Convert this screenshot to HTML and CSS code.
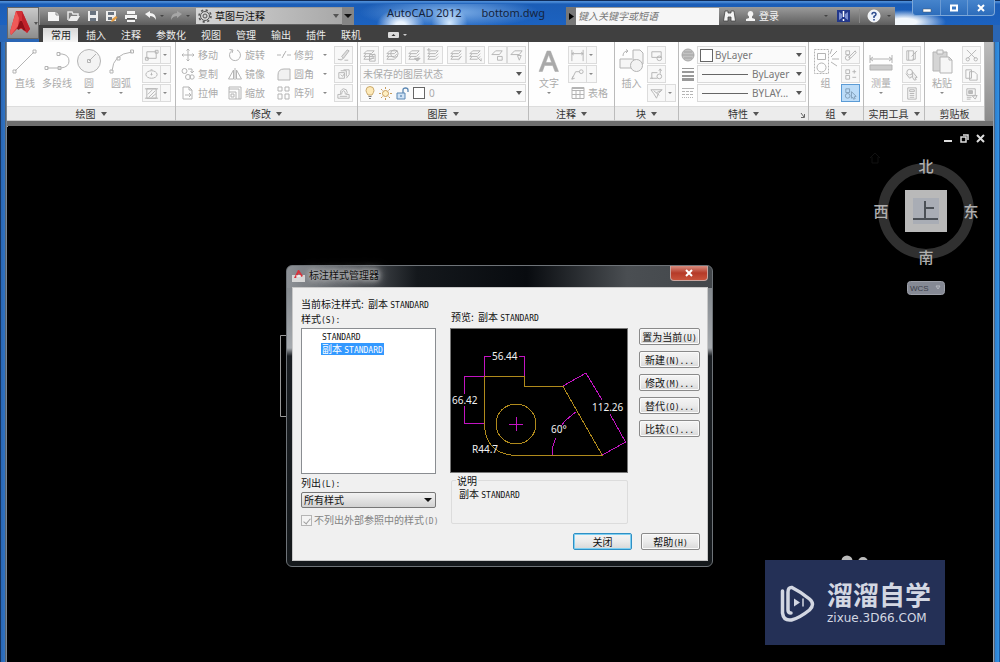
FILE: index.html
```html
<!DOCTYPE html>
<html lang="zh-CN">
<head>
<meta charset="utf-8">
<title>AutoCAD 2012 bottom.dwg</title>
<link rel="stylesheet" href="styles.css">
</head>
<body>
<svg class="defs" aria-hidden="true">
  <symbol id="layers" viewBox="0 0 16 16"><path d="M5 3h8l-3 3H2zM4 6.500l-2 2.500h8l3-3M4 9.500l-2 2.500h8l3-3"/></symbol>
  <symbol id="table" viewBox="0 0 14 14"><path d="M1 1.500h12v11H1zM1 4.500h12M1 8.500h12M5 4.500v8M9 4.500v8M1 2.500h12"/></symbol>
</svg>
<div class="window">
  <header class="top">
    <button class="appbtn" aria-label="应用程序菜单">
      <svg width="22" height="28" viewBox="0 0 22 28"><path d="M7 2l6 0 8 18-3 4-5-4H8l-6 6-1-3z" fill="#d32f35"/><path d="M7 2L1 23l1 3 7-9 1-8z" fill="#ef5a58"/><path d="M13 2l8 18-3 4-5-13z" fill="#c0212a"/><path d="M8 20l3-8h2l4 10-3-1-1-2h-2l-1 2z" fill="#8f0f17"/></svg>
      <i class="caret dark"></i>
    </button>
    <div class="heads">
      <div class="titlebar">
        <div class="qat">
          <button aria-label="新建"><svg width="14" height="12" viewBox="0 0 14 12"><path d="M1 2h8l3 3v6H1z" fill="#f4f4f4"/><path d="M9 2v3h3" stroke="#888" fill="none"/></svg></button>
          <button aria-label="打开"><svg width="14" height="12" viewBox="0 0 14 12"><path d="M1 10V2h4l1 2h5v2" fill="none" stroke="#e8e8e8" stroke-width="1.500"/><path d="M4 6h9l-3 5H1z" fill="#ececec"/></svg></button>
          <button aria-label="保存"><svg width="12" height="12" viewBox="0 0 12 12"><path d="M1 1h10v10H1z" fill="#eee"/><path d="M3 1h6v4H3z" fill="#69737f"/><path d="M3 8h6v3H3z" fill="#69737f"/></svg></button>
          <button aria-label="另存为"><svg width="13" height="13" viewBox="0 0 13 13"><path d="M1 1h10v10H1z" fill="#eee"/><path d="M3 2h6v3H3zM3 7h4v3H3z" fill="#69737f"/><path d="M6 12l1-3 4-3 1.500 1.500L9 11z" fill="#e49d44"/></svg></button>
          <button aria-label="打印"><svg width="14" height="13" viewBox="0 0 14 13"><path d="M3 1h8v3H3zM1 5h12v4H1zM3 10h8v2H3z" fill="#f4f4f4"/><path d="M3 8.500h8" stroke="#555"/></svg></button>
          <button aria-label="放弃"><svg width="13" height="12" viewBox="0 0 13 12"><path d="M1 4l5-3v2q6 0 6 7-2-4-6-4v2z" fill="#f4f4f4"/></svg></button>
          <i class="caret dim"></i>
          <button aria-label="重做"><svg width="13" height="12" viewBox="0 0 13 12"><path d="M12 4L7 1v2Q1 3 1 10q2-4 6-4v2z" fill="#a6a6a6"/></svg></button>
          <i class="caret dim"></i>
          <label class="workspace">
            <svg width="14" height="14" viewBox="0 0 14 14" fill="none" stroke="#555"><circle cx="7" cy="7" r="4.500"/><circle cx="7" cy="7" r="6" stroke-dasharray="2.200 2.500" stroke-width="1.600"/><circle cx="7" cy="7" r="2"/></svg>
            <select aria-label="工作空间"><option>草图与注释</option></select>
            <i class="caret dark"></i>
          </label>
          <button class="more" aria-label="自定义"><i class="caret black"></i></button>
        </div>
        <h1 class="apptitle"><span>AutoCAD 2012</span><span>bottom.dwg</span></h1>
        <div class="info">
          <button class="expand" aria-label="折叠"><svg width="5" height="7" viewBox="0 0 5 7"><path d="M0 0l5 3.500L0 7z"/></svg></button>
          <input class="search" type="text" placeholder="键入关键字或短语" aria-label="搜索">
          <button aria-label="查找"><svg width="13" height="14" viewBox="0 0 13 14"><path d="M2 2h3v2h3V2h3l1.500 10H8V8H5v4H.500z" fill="#f4f4f4" stroke="#444" stroke-width=".8"/></svg></button>
          <button class="login"><svg width="11" height="12" viewBox="0 0 11 12"><path d="M5.500 1a3 3 0 0 1 1.500 5.500V8l3 1v2H1V9l3-1V6.500A3 3 0 0 1 5.500 1z" fill="#f4f4f4"/></svg><span>登录</span></button>
          <i class="caret dim"></i>
          <button aria-label="Exchange"><svg width="13" height="12" viewBox="0 0 13 12"><path d="M0 0h13v12H0z" fill="#23388b"/><path d="M2 2l3 2v4l-3 2zM11 2L8 4v4l3 2z" fill="#7c8fd0"/><path d="M6.500 1v6M6.500 9v2" stroke="#fff" stroke-width="1.500"/></svg></button>
          <button class="help" aria-label="帮助"><svg width="14" height="14" viewBox="0 0 14 14"><circle cx="7" cy="7" r="6" fill="#eef3fb" stroke="#fff"/><path d="M5 5.500Q5 3.500 7 3.500t2 1.800Q9 6.500 7 7.500V9M7 10v1.500" fill="none" stroke="#2c4b8f" stroke-width="1.500"/></svg></button>
          <i class="caret dim"></i>
        </div>
        <div class="wincontrols">
          <button aria-label="最小化"><svg width="10" height="10" viewBox="0 0 10 10"><path d="M1 6h8v3H1z" fill="#fff" stroke="#456" stroke-width=".5"/></svg></button>
          <button aria-label="最大化"><svg width="10" height="10" viewBox="0 0 10 10"><path d="M2 2.500h6v5H2z" fill="none" stroke="#fff" stroke-width="2"/></svg></button>
          <button aria-label="关闭"><svg width="10" height="10" viewBox="0 0 10 10"><path d="M2 2l6 6M8 2L2 8" stroke="#fff" stroke-width="2"/></svg></button>
        </div>
      </div>
      <nav class="tabs">
        <button class="active">常用</button><button>插入</button><button>注释</button><button>参数化</button><button>视图</button><button>管理</button><button>输出</button><button>插件</button><button>联机</button>
        <button class="toggle" aria-label="最小化功能区"><svg width="11" height="6" viewBox="0 0 11 6"><rect width="11" height="6" rx="1" fill="#ddd"/><path d="M3.500 4l2-2 2 2z" fill="#333"/></svg><i class="caret light"></i></button>
      </nav>
    </div>
  </header>

  <div class="ribbon">
    <section class="panel">
      <div class="body draw">
        <div class="bigs">
          <button class="big"><svg width="26" height="26" viewBox="0 0 26 26"><path d="M3 23L22 4M1 22h3v3H1zM21 2h3v3h-3z"/></svg>直线</button>
          <button class="big"><svg width="26" height="26" viewBox="0 0 26 26"><path d="M15 6h3q7 1 7 7t-8 7H3M13 4.500h3v3h-3zM1 18.500h3v3H1zM14 18.500h3v3h-3z"/></svg>多段线</button>
          <button class="big"><svg width="26" height="26" viewBox="0 0 26 26"><circle cx="13" cy="13" r="11.500" fill="#f3f3f3"/><path d="M13 13l7-7M11.500 11.500h3v3h-3z"/></svg>圆<i class="caret"></i></button>
          <button class="big"><svg width="26" height="26" viewBox="0 0 26 26"><path d="M4 23Q5 6 24 4M2 22h3v3H2zM9 9h3v3H9zM22.500 2h3v3h-3z"/></svg>圆弧<i class="caret"></i></button>
        </div>
        <div class="stack">
          <button class="tool split"><svg viewBox="0 0 16 16"><path d="M3 4h10v7H3zM1.500 10h3v3h-3zM12 2.500h3v3h-3z"/></svg><i class="caret"></i></button>
          <button class="tool split"><svg viewBox="0 0 16 16"><ellipse cx="8" cy="8" rx="6" ry="4"/><path d="M8 6v3M7 8h2M7 3h2"/></svg><i class="caret"></i></button>
          <button class="tool split"><svg viewBox="0 0 16 16"><path d="M3 3h10v10H3zM5 12l7-7M4 9l5-5M8 12l5-4M1 3h14M1 13h14"/></svg><i class="caret"></i></button>
        </div>
      </div>
      <h2>绘图<i class="caret dark"></i></h2>
    </section>

    <section class="panel">
      <div class="body modify">
        <button class="txt"><svg viewBox="0 0 14 14"><path d="M7 1v4M7 9v4M1 7h4M9 7h4M5.500 2.500L7 1l1.500 1.500M5.500 11.500L7 13l1.500-1.500M2.500 5.500L1 7l1.500 1.500M11.500 5.500L13 7l-1.500 1.500M6 6h2v2H6z"/></svg>移动</button>
        <button class="txt"><svg viewBox="0 0 14 14"><path d="M9 2a5.500 5.500 0 1 1-5 .5M1.500 1.500L5 2 4 5"/></svg>旋转</button>
        <button class="txt"><svg viewBox="0 0 14 14"><path d="M0 7h4M10 7h4M5 10l4-7M6 7h1"/></svg>修剪<i class="caret"></i></button>
        <button class="tool"><svg viewBox="0 0 16 16"><path d="M2 12q4 2 6-1M6 9l6-7 2 1-6 8zM9 13h4" fill="#ddd"/></svg></button>
        <button class="txt"><svg viewBox="0 0 14 14"><circle cx="3.500" cy="4" r="2.500"/><circle cx="7" cy="10" r="2.500"/><circle cx="11" cy="10" r="2.200"/><path d="M7 2h4v3M9.500 4L11 6l2-2"/></svg>复制</button>
        <button class="txt"><svg viewBox="0 0 14 14"><path d="M7 1v12M5.500 3v9h-5zM8.500 3v9h5z"/></svg>镜像</button>
        <button class="txt"><svg viewBox="0 0 14 14"><path d="M1 13V8q0-6 6-6h6v11z" fill="#f1f1f1"/></svg>圆角<i class="caret"></i></button>
        <button class="tool"><svg viewBox="0 0 16 16"><path d="M3 6h6v6H3zM5 4h6v6M8 3h6v5l-3 4M5 8l2 2 2-3"/></svg></button>
        <button class="txt"><svg viewBox="0 0 14 14"><path d="M2 13V1h6l3 3v9zM4 9h6M8 7l2 2-2 2M8 1v3h3"/></svg>拉伸</button>
        <button class="txt"><svg viewBox="0 0 14 14"><path d="M1 1h12v12H1zM1 6h7v7M1 3h10v10M3 8h3v3H3z"/></svg>缩放</button>
        <button class="txt"><svg viewBox="0 0 14 14"><path d="M1 1h4v4H1zM8 1h4v4H8zM1 8h4v5H1zM8 8h4v5H8z"/></svg>阵列<i class="caret"></i></button>
        <button class="tool"><svg viewBox="0 0 16 16"><path d="M2 13V9h3q-1-5 3-6 4 0 4 4l-1 2h3v4zM4 11h8M6 9q0-4 2-4t2 4"/></svg></button>
      </div>
      <h2>修改<i class="caret dark"></i></h2>
    </section>

    <section class="panel">
      <div class="body layer">
        <div class="pairs">
          <button class="tool"><svg viewBox="0 0 16 16"><use href="#layers"/><path d="M8 7h6v7H8zM9 9h4M9 11h4"/></svg></button>
          <button class="tool"><svg viewBox="0 0 16 16"><use href="#layers"/><circle cx="10" cy="6" r="4"/></svg></button>
          <span><button class="tool"><svg viewBox="0 0 16 16"><use href="#layers"/><path d="M8 11h6l-3 3z" fill="#bbb"/></svg></button><button class="tool"><svg viewBox="0 0 16 16"><use href="#layers"/><path d="M1 2h4M3 0v4"/></svg></button></span>
          <span><button class="tool"><svg viewBox="0 0 16 16"><use href="#layers"/><path d="M13 9l-3 4"/></svg></button><button class="tool"><svg viewBox="0 0 16 16"><use href="#layers"/><path d="M10 10l4 4v-3"/></svg></button></span>
          <span><button class="tool"><svg viewBox="0 0 16 16"><path d="M2 7l4-4h7l-3 4zM8 9h5v4H8z"/></svg></button><button class="tool"><svg viewBox="0 0 16 16"><path d="M2 7l4-4h8l-3 4zM9 8h4l-2 5z"/></svg></button></span>
        </div>
        <label class="combo"><select aria-label="图层状态"><option>未保存的图层状态</option></select><i class="caret dark"></i></label>
        <label class="combo icons">
          <svg width="10" height="14" viewBox="0 0 10 14"><path d="M3 9Q1 6 1 4.500a4 4 0 0 1 8 0Q9 6 7 9z" fill="#fde9b8" stroke="#c9a86a"/><path d="M3.500 10.500h3M4 12.500h2" stroke="#777"/></svg>
          <svg width="13" height="13" viewBox="0 0 13 13"><circle cx="6.500" cy="6.500" r="3" fill="#fff0c4" stroke="#c99d5c"/><path d="M6.500 0v2M6.500 11v2M0 6.500h2M11 6.500h2M2 2l1.500 1.500M9.500 9.500L11 11M11 2L9.500 3.500M2 11l1.500-1.500" stroke="#c99d5c"/></svg>
          <svg width="13" height="13" viewBox="0 0 13 13"><path d="M1 6h8v6H1z" fill="#cfe2f5" stroke="#5b87b3"/><path d="M7 6V3q0-2 2.500-2T12 3v2M5 8v2" fill="none" stroke="#5b87b3" stroke-width="1.300"/></svg>
          <b class="swatch"></b>
          <select aria-label="图层"><option>0</option></select><i class="caret dark"></i>
        </label>
      </div>
      <h2>图层<i class="caret dark"></i></h2>
    </section>

    <section class="panel">
      <div class="body annot">
        <button class="big"><svg width="26" height="26" viewBox="0 0 26 26"><path d="M3 23.500L11 3h3.500l8 20.500h-3.500l-2.300-6H8.600l-2.200 6zM9.800 14.500h5.800L12.700 6.800z" fill="#a9a9a9" stroke="#a9a9a9" stroke-width=".5"/></svg>文字<i class="caret"></i></button>
        <div class="stack">
          <button class="tool split"><svg viewBox="0 0 16 16"><path d="M2 2v12M14 2v12M2 6h12M4 4.500L2 6l2 1.500M12 4.500L14 6l-2 1.500"/></svg><i class="caret"></i></button>
          <button class="tool split"><svg viewBox="0 0 16 16"><path d="M2 13l4-8h4M3 10l-1 3 3-1"/><circle cx="12" cy="5" r="2"/></svg><i class="caret"></i></button>
          <button class="txt"><svg viewBox="0 0 14 14"><use href="#table"/></svg>表格</button>
        </div>
      </div>
      <h2>注释<i class="caret dark"></i></h2>
    </section>

    <section class="panel">
      <div class="body block">
        <button class="big"><svg width="26" height="26" viewBox="0 0 26 26"><path d="M14 10V2h7l3 3v11h-8" fill="#f6f6f6"/><path d="M1 11h14v9H1z" fill="#f6f6f6"/><circle cx="17.500" cy="17.500" r="6" fill="#f3f3f3"/><path d="M4 8q0-5 5-5M7 1.500L9 3 7 5"/></svg>插入</button>
        <div class="stack">
          <button class="tool"><svg viewBox="0 0 16 16"><path d="M3 4h10v6H3z"/><circle cx="11" cy="11" r="2.500"/></svg></button>
          <button class="tool"><svg viewBox="0 0 16 16"><path d="M9 6H3v6h6M12 2v5M10.500 4L12 2l1.500 2M1 12h3"/><circle cx="11" cy="10" r="2.500"/></svg></button>
          <button class="tool split"><svg viewBox="0 0 16 16"><path d="M2 4h12l-4 4-2 5-3-5zM5 5l6 5M8 7l5-2"/></svg><i class="caret"></i></button>
        </div>
      </div>
      <h2>块<i class="caret dark"></i></h2>
    </section>

    <section class="panel">
      <div class="body props">
        <svg width="14" height="14" viewBox="0 0 14 14"><circle cx="7" cy="7" r="6" fill="#c2c2c2" stroke="#aaa"/><path d="M1 7h12M3 4h8M3 10h8" stroke="#a2a2a2"/></svg>
        <label class="combo"><b class="swatch"></b><select aria-label="颜色"><option>ByLayer</option></select><i class="caret dark"></i></label>
        <svg width="14" height="14" viewBox="0 0 14 14" shape-rendering="crispEdges"><path d="M1 1h12v1H1zM1 4h12v2H1zM1 8h12v2H1zM1 11h12v3H1z" fill="#999" stroke="none"/></svg>
        <label class="combo line"><hr><select aria-label="线宽"><option>ByLayer</option></select><i class="caret dark"></i></label>
        <svg width="14" height="14" viewBox="0 0 14 14"><path d="M1 2.500h12"/><path d="M1 5.500h12M1 8.500h12" stroke-dasharray="3 1"/><path d="M1 11.500h12" stroke-dasharray="1 1"/></svg>
        <label class="combo line"><hr><select aria-label="线型"><option>BYLAY...</option></select><i class="caret dark"></i></label>
      </div>
      <h2>特性<i class="caret dark"></i><button class="launcher" aria-label="特性设置"><svg width="5" height="5" viewBox="0 0 5 5"><path d="M1 0l3 4M4.500 1v3.500H1" stroke="#666" fill="none"/></svg></button></h2>
    </section>

    <section class="panel">
      <div class="body">
        <button class="big"><svg width="26" height="26" viewBox="0 0 26 26"><path d="M1.500 1.500h14v24h-14z" stroke-dasharray="2 1"/><path d="M4.500 5.500h8v6h-8zM18 9l6-6M19 11h7M17 6l2-5M18 14l6 4"/><circle cx="8.500" cy="19.500" r="4.500"/></svg>组</button>
        <div class="stack">
          <button class="tool"><svg viewBox="0 0 16 16"><path d="M3 3h4v4H3zM6 10l7-7 1 2-6 6z"/><circle cx="5" cy="10.500" r="2.500"/></svg></button>
          <button class="tool"><svg viewBox="0 0 16 16"><path d="M3 3h4v4H3zM3 9h4v4H3zM10 5h4M12 3v4M10 11h4"/></svg></button>
          <button class="tool on"><svg viewBox="0 0 16 16"><path d="M3 3h4v4H3zM9 6l5 5-2 .500 1 2-2 .500-.500-2L9 13z"/><circle cx="5" cy="10.500" r="2.500"/></svg></button>
        </div>
      </div>
      <h2>组<i class="caret dark"></i></h2>
    </section>

    <section class="panel">
      <div class="body">
        <button class="big"><svg width="26" height="26" viewBox="0 0 26 26"><path d="M2 7v8M24 7v8M2 11h22M5 9l-3 2 3 2M21 9l3 2-3 2"/><path d="M2 17h22v5H2z" fill="#ccc"/></svg>测量<i class="caret"></i></button>
        <div class="stack">
          <button class="tool"><svg viewBox="0 0 16 16"><path d="M3 3h7v10H3zM5 3v10M8 9l6-6M12 4v8H9"/></svg></button>
          <button class="tool"><svg viewBox="0 0 16 16"><circle cx="6" cy="5.500" r="3"/><path d="M2 7l4 5 3-2M9 5l5 6-2 .500 1 2-2 .500-2-3z" fill="#eee"/></svg></button>
          <button class="tool"><svg viewBox="0 0 16 16"><path d="M4 2h9v12H4zM6 4h5v2H6zM6 8h5M6 10h5M6 12h5"/></svg></button>
        </div>
      </div>
      <h2>实用工具<i class="caret dark"></i></h2>
    </section>

    <section class="panel">
      <div class="body">
        <button class="big"><svg width="26" height="26" viewBox="0 0 26 26"><path d="M4 4h14v19H4z" fill="#d5d5d5"/><path d="M8 2h6v4H8z" fill="#eee"/><path d="M11 9h9l3 3v13H11z" fill="#f6f6f6"/><path d="M20 9v3h3"/></svg>粘贴<i class="caret"></i></button>
        <div class="stack">
          <button class="tool"><svg viewBox="0 0 16 16"><path d="M3 2l9 9M13 2l-9 9"/><circle cx="4" cy="12" r="1.800"/><circle cx="12.500" cy="12" r="1.800"/></svg></button>
          <button class="tool"><svg viewBox="0 0 16 16"><path d="M2 3h6v9H2zM6 5h5l3 3v6H6z" fill="#fafafa"/></svg></button>
          <button class="tool"><svg viewBox="0 0 16 16"><path d="M3 3h9v7H3zM3 12h5M3 14h4M9 11l3 3 2-4z" /><path d="M5 5h4v3H5z" fill="#bbb"/></svg></button>
        </div>
      </div>
      <h2>剪贴板</h2>
    </section>
  </div>

  <main class="canvas">
    <div class="docbtns">
      <button aria-label="最小化文档"><svg width="9" height="9" viewBox="0 0 9 9"><path d="M0 6h8v2H0z" fill="#ddd"/></svg></button>
      <button aria-label="还原文档"><svg width="9" height="9" viewBox="0 0 9 9"><path d="M1 3h5v5H1zM3 1h5v5" fill="none" stroke="#ddd" stroke-width="1.500"/></svg></button>
      <button aria-label="关闭文档"><svg width="9" height="9" viewBox="0 0 9 9"><path d="M1 1l7 7M8 1L1 8" stroke="#ddd" stroke-width="2"/></svg></button>
    </div>
    <svg class="viewcube" width="118" height="148" viewBox="866 148 118 148">
      <path d="M870 158l5-5 5 5M872 157v6h6v-6" fill="none" stroke="#111"/>
      <circle cx="926" cy="211" r="43" fill="none" stroke="#303030" stroke-width="10"/>
      <path d="M905 190h42v42h-42z" fill="#b9b9b9"/><path d="M913 198h26v26h-26z" fill="#a9adb5"/>
      <path d="M925 201v18M926 208h8M913 219h25" stroke="#4b5056" stroke-width="2" fill="none"/>
      <g class="compass"><text x="926" y="172">北</text><text x="881" y="217">西</text><text x="971" y="217">东</text><text x="926" y="263">南</text></g>
      <rect x="907.500" y="281.500" width="37" height="13" rx="3" fill="#858994" stroke="#9ea1aa"/>
      <text class="wcs" x="910" y="291">WCS</text><path d="M936 286l2 3 2-3z" fill="none" stroke="#b5b8c0"/>
    </svg>
    <svg class="sketch" width="6" height="82" viewBox="0 0 6 82"><path d="M6 .500H.500v81H6" fill="none" stroke="#999"/></svg>

    <section class="dialog" role="dialog" aria-labelledby="dlgtitle">
      <header>
        <svg width="13" height="12" viewBox="0 0 13 12"><path d="M0 5h13v7H0z" fill="#d8d8d8"/><path d="M2 8L6 0h1l4 6-2 1-2-4-3 5z" fill="#d6333c"/><path d="M4 6h5" stroke="#fff"/></svg>
        <h2 id="dlgtitle">标注样式管理器</h2>
        <button class="close" aria-label="关闭"><svg width="8" height="8" viewBox="0 0 8 8"><path d="M1 1l6 6M7 1L1 7" stroke="#fff" stroke-width="2"/></svg></button>
      </header>
      <div class="client">
        <p>当前标注样式: <span>副本 <tt>STANDARD</tt></span></p>
        <div class="cols">
          <div class="left">
            <p id="styles">样式<tt>(S):</tt></p>
            <ul class="list" role="listbox" aria-labelledby="styles">
              <li role="option"><tt>STANDARD</tt></li>
              <li role="option" aria-selected="true" class="sel">副本 <tt>STANDARD</tt></li>
            </ul>
            <label class="listout" for="out">列出<tt>(L):</tt></label>
            <div class="drop"><select id="out"><option>所有样式</option></select><i class="caret black"></i></div>
            <label class="check"><input type="checkbox" checked disabled><span>不列出外部参照中的样式<tt>(D)</tt></span></label>
          </div>
          <div class="mid">
            <p>预览: <span>副本 <tt>STANDARD</tt></span></p>
            <svg class="preview" width="176" height="143" viewBox="451 329 176 143" role="img" aria-label="标注预览">
              <path d="M451 329h176v143H451z" fill="#000"/>
              <g class="dim"><path d="M484.500 376V356.500h6M519 356.500h5.500V376M484 376.500H464.500V394M464.500 406V423.500H484M563 386l23-13 16 27M610 414l15.500 28-23 13M552 455q0-9 4-17M561 426q5-7 15-14M516.500 417v14M509 424.500h14"/></g>
              <g class="part"><path d="M524.500 376.500v10H563L602.500 455.500H516Q485 454 484.500 424V376.500z"/><circle cx="516" cy="424" r="20"/></g>
              <g class="nums"><text x="492" y="360">56.44</text><text x="452" y="404">66.42</text><text x="592" y="411">112.26</text><text x="551" y="433">60°</text><text x="472" y="453">R44.7</text></g>
            </svg>
            <fieldset><legend>说明</legend>副本 <tt>STANDARD</tt></fieldset>
          </div>
          <div class="right">
            <button class="btn">置为当前<tt>(U)</tt></button>
            <button class="btn">新建<tt>(N)...</tt></button>
            <button class="btn">修改<tt>(M)...</tt></button>
            <button class="btn">替代<tt>(O)...</tt></button>
            <button class="btn">比较<tt>(C)...</tt></button>
          </div>
        </div>
        <footer><button class="btn primary">关闭</button><button class="btn">帮助<tt>(H)</tt></button></footer>
      </div>
    </section>

    <div class="watermark">
      <svg class="dots" width="28" height="5" viewBox="0 0 28 5"><circle cx="6" cy="6" r="5.500" fill="#bbb"/><circle cx="22" cy="7" r="5" fill="#bbb"/></svg>
      <svg width="36" height="38" viewBox="0 0 36 38" fill="none" stroke="#d3d7e2" stroke-width="3.500" stroke-linecap="round"><path d="M2.500 7v22q1 8 9 7 8-2 18-10 6-6 0-11Q21 8 12 3.500 8 3 8 8v18q0 3 3 3"/><path d="M14 14.500l6 4-6 4z" fill="#d3d7e2" stroke="none"/><path d="M23 15v7" stroke-width="1.500"/></svg>
      <div><strong>溜溜自学</strong><span>zixue.3D66.COM</span></div>
    </div>
  </main>
</div>
</body>
</html>
```
FILE: styles.css
```css
* { box-sizing: border-box; }
body {
  margin: 0;
  font: 10px/14px "Noto Sans", "Noto Sans CJK SC", sans-serif;
  color: #333;
}
button, select, input { font: inherit; color: inherit; }
button { border: 0; padding: 0; margin: 0; background: none; }
select { appearance: none; border: 0; padding: 0; margin: 0; background: none; min-width: 0; }
h1, h2, p, ul { margin: 0; padding: 0; font-weight: normal; }
.defs { display: none; }

.caret {
  flex: none;
  width: 0;
  height: 0;
  border: 2px solid transparent;
  border-top-color: #888;
  border-bottom: 0;
}
.caret.dark { border-width: 4px 3px 0; border-top-color: #555; }
.caret.black { border-width: 4px 4px 0; border-top-color: #111; }
.caret.light { border-top-color: #ccc; }
.caret.dim { border-top-color: #444; }

/* window frame */
.window {
  display: flex;
  flex-direction: column;
  min-height: 100vh;
  padding: 0 7px;
  background:
    linear-gradient(90deg, #16335e 1px, #2a66b5 1px, #2f74c4 5px, #45505e 5px, #8b99a8 7px, transparent 7px),
    linear-gradient(270deg, #1d5aa0 1px, #3492e2 1px, #2b7ed0 5px, #2d4a6a 5px, #b6bcc2 7px, transparent 7px),
    #000;
}
.top {
  display: flex;
  margin: 0 -7px;
  padding: 0 5px 0 7px;
  background: linear-gradient(#0f2c5a 1px, #4b8bd6 1px, #4b8bd6 2px, #1b5db6 4px, #1c62c0 25px, #2a66b5 25px);
}
.appbtn {
  display: flex;
  align-items: center;
  justify-content: center;
  gap: 3px;
  width: 32px;
  height: 32px;
  margin: 7px 0 3px;
  border: 1px solid #666;
  background: linear-gradient(#c9c9c9, #8d8d8d);
}
.appbtn .caret { border-width: 3px 2px 0; }
.heads { flex: 1; min-width: 0; }
.titlebar {
  display: flex;
  height: 25px;
  align-items: flex-end;
  background: radial-gradient(ellipse 42px 12px at 865px 22px, #f2f7fc 30%, transparent);
}
.qat, .info {
  display: flex;
  align-items: center;
  height: 18px;
  background: linear-gradient(#9b9b9b, #5e5e5e);
}
.qat button, .info button { display: flex; align-items: center; }
.qat { gap: 6px; width: 315px; padding-left: 7px; border-left: 1px solid #999; }
.qat .dim { margin-left: -3px; }
.workspace {
  display: flex;
  align-items: center;
  flex: 1;
  gap: 3px;
  height: 16px;
  padding: 0 3px 0 2px;
  background: linear-gradient(90deg, #d6d6d6, #a8a8a8);
  color: #111;
}
.workspace select { flex: 1; line-height: 14px; }
.qat .more { width: 12px; height: 18px; margin-left: -6px; justify-content: center; background: #858585; }
.apptitle {
  flex: 1;
  display: flex;
  gap: 20px;
  height: 21px;
  padding-left: 33px;
  font-size: 11px;
  line-height: 18px;
  color: #14233c;
  background:
    radial-gradient(ellipse 24px 16px at 22% 100%, #eaf4ff 20%, transparent),
    radial-gradient(ellipse 18px 16px at 45% 90%, #d5eaff, transparent),
    radial-gradient(ellipse 90px 16px at 45% 40%, #7fb0e8, transparent);
  white-space: nowrap;
}
.info { width: 329px; gap: 9px; }
.info .expand { width: 10px; height: 18px; justify-content: center; background: #777; }
.info .search {
  width: 143px;
  height: 17px;
  margin-left: -9px;
  padding: 0 2px;
  border: 0;
  background: #f6f6f6;
  font-style: italic;
}
.search::placeholder { color: #777; opacity: 1; }
.info .search + button { margin-left: -5px; }
.info .login { flex: 1; gap: 3px; color: #f4f4f4; }
.info .help { padding-left: 7px; border-left: 1px solid #888; }
.info > .caret:last-child { margin: 0 4px 0 -3px; }
.wincontrols {
  display: flex;
  align-self: flex-start;
  height: 16px;
  margin-left: 17px;
  border: 1px solid #7ea8d8;
  border-top: 0;
  border-radius: 0 0 4px 4px;
  background: linear-gradient(#4684cc, #2d6dbb);
}
.wincontrols button { display: flex; align-items: center; justify-content: center; width: 27px; border-left: 1px solid #6b9bd4; }
.wincontrols button:first-child { border: 0; }
.tabs { display: flex; align-items: flex-end; height: 17px; padding-left: 4px; background: #404040; margin-right: 2px; color: #ededed; }
.tabs button { padding: 0 7px 0 8px; height: 14px; line-height: 14px; }
.tabs .active { background: linear-gradient(#d6d6d6, #f6f6f6); color: #222; }
.tabs .toggle { display: flex; align-items: center; gap: 4px; margin-left: 12px; }

/* ribbon */
.ribbon {
  display: grid;
  grid-template-columns: 169fr 182fr 171fr 86fr 64fr 130fr 55fr 61fr 60fr 8px;
  background: linear-gradient(#bcbcbc, #8a8a8a);
  border-bottom: 5px solid #6f6f6f;
  box-shadow: 0 1px #aaa;
}
.panel { min-width: 0; background: #fefefe; border-right: 1px solid #bbb; border-bottom: 1px solid #ccc; }
.panel h2 {
  display: flex;
  align-items: center;
  justify-content: center;
  gap: 5px;
  height: 14px;
  font-size: 10px;
  background: #ececec;
  border-top: 1px solid #ddd;
}
.launcher { margin-left: 36px; margin-right: -46px; }
.body { display: flex; justify-content: space-between; height: 64px; padding: 4px 3px 4px 1px; color: #ababab; }
.body svg { fill: none; stroke: #b4b4b4; flex: none; }
.bigs { display: flex; }
.big { display: flex; flex-direction: column; align-items: center; width: 32px; padding-top: 2px; white-space: nowrap; }
.big .caret { margin-top: 2px; }
.big svg { margin-bottom: 2px; }
.stack { display: grid; grid-template-rows: repeat(3, 18px); gap: 1px; justify-items: start; }
.tool {
  display: flex;
  align-items: center;
  justify-content: center;
  width: 19px;
  height: 18px;
  border: 1px solid #dcdcdc;
  background: #f8f8f8;
}
.tool svg { width: 15px; height: 15px; }
.tool.split { width: 29px; justify-content: flex-start; gap: 4px; padding-left: 1px; background: linear-gradient(90deg, #f8f8f8 17px, #dcdcdc 17px, #dcdcdc 18px, #f8f8f8 18px); }
.tool.on { background: #bcdcf8; border-color: #5b9bd5; }
.tool.on svg { stroke: #7f9db8; }
.txt { display: flex; align-items: center; gap: 3px; white-space: nowrap; }
.txt svg { width: 14px; height: 14px; }
.txt .caret { margin-left: 6px; }
.draw { padding: 4px 4px 4px 2px; }
.modify { display: grid; grid-template-columns: 46px 48px 56px 19px; grid-template-rows: repeat(3, 18px); gap: 1px; padding: 4px 5px; justify-content: space-between; }
.layer { flex-direction: column; padding: 4px 2px; }
.pairs { display: flex; justify-content: space-between; }
.pairs span { display: flex; }
.combo {
  display: flex;
  align-items: center;
  height: 18px;
  padding: 0 3px 0 2px;
  border: 1px solid #dadada;
  background: #fafafa;
  min-width: 0;
}
.combo select { flex: 1; }
.combo.icons { gap: 4px; padding-left: 4px; }
.swatch { flex: none; width: 13px; height: 13px; border: 1px solid #666; background: #fff; margin-right: 2px; }
.layer .swatch { width: 12px; height: 12px; margin: 0; }
.annot { padding: 4px 5px 4px 4px; }
.annot .stack { margin-right: 5px; width: 36px; }
.annot .txt { padding-left: 3px; }
.block { padding-right: 2px; }
.props { display: grid; grid-template-columns: 14px 1fr; grid-template-rows: repeat(3, 18px); gap: 1px 2px; align-items: center; padding: 4px 2px; color: #777; }
.combo.line hr { flex: 1; margin: 0 4px 0 2px; border: 0; border-top: 1px solid #666; }
.combo.line select { flex: none; width: 41px; }
.combo.line .caret { margin-left: 3px; }

/* drawing area */
.canvas { position: relative; flex: 1; min-height: 536px; margin: 0 0 0 1px; background: #000; overflow: hidden; }
.docbtns { display: flex; justify-content: flex-end; gap: 7px; padding: 8px 8px 0 0; }
.docbtns button { display: flex; }
.viewcube { position: absolute; top: 22px; right: 9px; }
.compass { font: 500 15px "Noto Sans CJK SC", sans-serif; fill: #b0b0b0; text-anchor: middle; }
.wcs { font: 8px "Liberation Sans", sans-serif; fill: #3c404a; }
.sketch { position: absolute; left: 272px; top: 209px; }

/* dialog */
.dialog {
  position: absolute;
  left: 278px;
  top: 139px;
  width: 427px;
  padding: 0 4px 5px 5px;
  border: 1px solid #6e7378;
  border-radius: 6px;
  color: #111;
  background:
    linear-gradient(90deg, #8d9196, #5a5e63 60px, #14181c 130px, #080b0f 240px, #4a4e52 340px, #43474b 100%) 0 0 / 100% 22px no-repeat,
    linear-gradient(#858a8f, #a5a9ad 60px, #1a1e22 68px, #14181b) 0 22px;
}
.dialog header { display: flex; align-items: flex-start; height: 21px; }
.dialog header > svg { margin: 4px 4px 0 0; }
.dialog h2 { flex: 1; padding-top: 2px; font-size: 10px; text-shadow: 0 0 5px #ddd, 0 0 8px #ccc, 0 0 12px #aaa; }
.close {
  display: flex;
  align-items: center;
  justify-content: center;
  width: 38px;
  height: 15px;
  border: 1px solid #c9a49e;
  border-top: 0;
  border-radius: 0 0 4px 4px;
  background: linear-gradient(#d88c7e, #b53a28 50%, #c8523a);
}
.client { border: 1px solid #c8c8c8; background: #f0f0f0; padding: 9px 7px 10px 8px; }
.client, .btn { font-family: "Noto Sans CJK SC", sans-serif; font-size: 10px; line-height: 14px; }
.client p { white-space: nowrap; }
.client p > span { margin-left: 2px; }
tt { font-family: "DejaVu Sans Mono", monospace; font-size: 8px; line-height: 8px; }
.cols { display: grid; grid-template-columns: 139px 177px 61px; justify-content: space-between; padding-top: 1px; }
.left { display: flex; flex-direction: column; padding-right: 4px; }
.list { height: 146px; margin-top: 2px; padding: 1px 19px; border: 1px solid #8a8d91; background: #fff; list-style: none; line-height: 12px; }
.list li { width: max-content; height: 12px; margin-bottom: 1px; padding: 0 1px; white-space: nowrap; }
.list .sel { background: #3399ff; color: #fff; }
.listout { margin-top: 2px; }
.drop { display: flex; align-items: center; height: 16px; margin-top: 2px; padding-right: 3px; border: 1px solid #777; border-radius: 2px; background: linear-gradient(#f2f2f2, #d2d2d2); }
.drop select { flex: 1; padding-left: 2px; }
.check { display: flex; align-items: center; gap: 2px; margin-top: 5px; color: #838383; white-space: nowrap; }
.check input { appearance: none; flex: none; width: 11px; height: 11px; margin: 0; border: 1px solid #b5b5b5; background: #f4f4f4; display: grid; place-items: center; }
.check input:checked::after { content: ""; width: 3px; height: 6px; border: solid #a0a0a0; border-width: 0 1px 1px 0; transform: rotate(40deg); }
.mid { display: flex; flex-direction: column; margin-top: -2px; }
.preview { flex: none; margin-top: 5px; outline: 1px solid #777; }
.part, .dim { fill: none; stroke: #b08a1c; shape-rendering: crispEdges; }
.dim { stroke: #c314c3; }
.nums { font: 10px "Noto Sans", sans-serif; fill: #f0f0f0; }
fieldset { height: 50px; margin: 2px 0 0; padding: 0 7px; border: 1px solid #dcdcdc; border-radius: 2px; min-width: 0; }
legend { padding: 0 1px; height: 13px; margin-left: -3px; }
.right { display: flex; flex-direction: column; gap: 6px; padding-top: 16px; }
.btn {
  height: 17px;
  border: 1px solid #8a8a8a;
  border-radius: 2px;
  background: linear-gradient(#f4f4f4, #ebebeb 50%, #d8d8d8);
  box-shadow: inset 0 0 0 1px #fafafa;
  white-space: nowrap;
}
.btn.primary { border-color: #2f8fc4; box-shadow: inset 0 0 0 1px #7fd0f2; }
footer { display: flex; justify-content: flex-end; gap: 9px; margin-top: 6px; }
footer .btn { width: 59px; }

.watermark {
  position: absolute;
  left: 757px;
  top: 434px;
  display: flex;
  align-items: center;
  gap: 11px;
  width: 180px;
  height: 85px;
  padding-left: 15px;
  background: #243056;
  color: #d3d7e2;
}
.dots { position: absolute; left: 76px; top: -5px; }
.watermark div { display: grid; }
.watermark strong { font: bold 26px/30px "Liberation Sans", "Noto Sans CJK SC", sans-serif; }
.watermark div span { font: 12px/14px "DejaVu Sans", sans-serif; }
```
